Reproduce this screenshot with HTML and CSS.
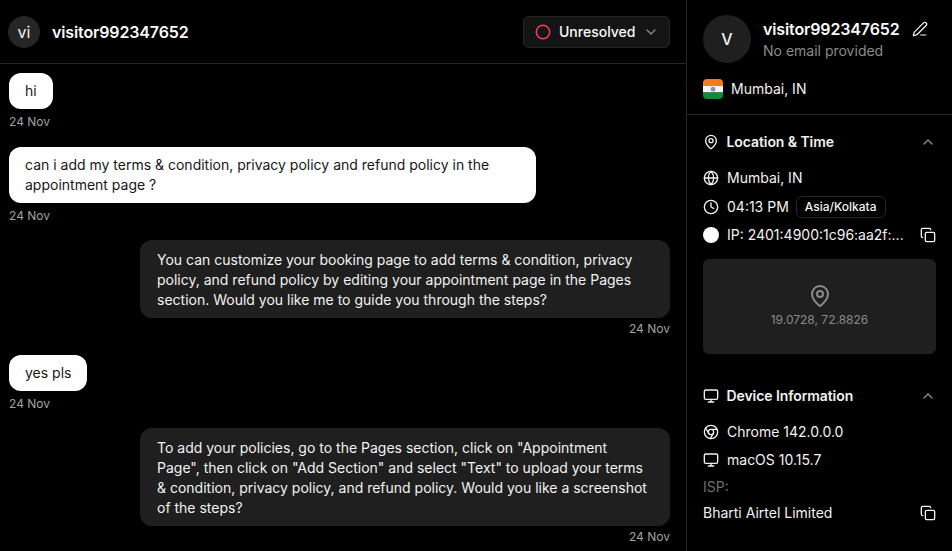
FILE: index.html
```html
<!DOCTYPE html>
<html lang="en">
<head>
<meta charset="utf-8">
<title>Conversation</title>
<link rel="stylesheet" href="styles.css">
</head>
<body>
<svg class="defs" width="0" height="0" aria-hidden="true">
  <defs>
    <symbol id="i-chev-up" viewBox="0 0 24 24"><path d="m18 15-6-6-6 6"/></symbol>
    <symbol id="i-copy" viewBox="0 0 24 24"><rect x="8" y="8" width="14" height="14" rx="2"/><path d="M4 16c-1.100 0-2-.9-2-2V4c0-1.100.9-2 2-2h10c1.100 0 2 .9 2 2"/></symbol>
    <symbol id="i-pin" viewBox="0 0 24 24"><path d="M20 10c0 5-5.500 10.200-7.400 11.800a1 1 0 0 1-1.200 0C9.500 20.200 4 15 4 10a8 8 0 0 1 16 0"/><circle cx="12" cy="10" r="3"/></symbol>
    <symbol id="i-monitor" viewBox="0 0 24 24"><rect x="2" y="3" width="20" height="14" rx="2"/><path d="M8 21h8M12 17v4"/></symbol>
  </defs>
</svg>
<div class="app">
  <main class="chat">
    <header class="chat-head">
      <div class="who">
        <span class="avatar-sm">vi</span>
        <span class="who-name">visitor992347652</span>
      </div>
      <button class="status" type="button">
        <svg class="status-ring" viewBox="0 0 16 16"><circle cx="8" cy="8" r="6.700"/></svg>
        <span>Unresolved</span>
        <svg class="ico ico-chev" viewBox="0 0 24 24"><path d="m6 9 6 6 6-6"/></svg>
      </button>
    </header>
    <section class="messages">
      <div class="msg">
        <p class="bubble user">hi</p>
        <time class="stamp">24 Nov</time>
      </div>
      <div class="msg">
        <p class="bubble user">can i add my terms &amp; condition, privacy policy and refund policy in the appointment page ?</p>
        <time class="stamp">24 Nov</time>
      </div>
      <div class="msg out">
        <p class="bubble agent">You can customize your booking page to add terms &amp; condition, privacy policy, and refund policy by editing your appointment page in the Pages section. Would you like me to guide you through the steps?</p>
        <time class="stamp">24 Nov</time>
      </div>
      <div class="msg">
        <p class="bubble user">yes pls</p>
        <time class="stamp">24 Nov</time>
      </div>
      <div class="msg out">
        <p class="bubble agent">To add your policies, go to the Pages section, click on "Appointment Page", then click on "Add Section" and select "Text" to upload your terms &amp; condition, privacy policy, and refund policy. Would you like a screenshot of the steps?</p>
        <time class="stamp">24 Nov</time>
      </div>
    </section>
  </main>
  <aside class="side">
    <section class="profile">
      <div class="profile-top">
        <span class="avatar-lg">V</span>
        <div class="profile-text">
          <div class="profile-name">
            <span>visitor992347652</span>
            <svg class="ico ico-edit" viewBox="0 0 24 24"><path d="M21.200 6.800a2.800 2.800 0 0 0-4-4L3.800 16.200a2 2 0 0 0-.5.830l-1.300 4.370a.5.500 0 0 0 .6.600l4.400-1.300a2 2 0 0 0 .83-.5z"/><path d="M13 21h8"/></svg>
          </div>
          <div class="muted-line">No email provided</div>
        </div>
      </div>
      <div class="place">
        <svg class="flag" viewBox="0 0 20 20"><rect width="20" height="7" fill="#f47a20"/><rect y="7" width="20" height="6.500" fill="#f4f4f4"/><rect y="13.500" width="20" height="6.500" fill="#138a3a"/><circle cx="10" cy="10.200" r="2.400" fill="#8b8fb8"/></svg>
        <span>Mumbai, IN</span>
      </div>
    </section>
    <section class="panel">
      <div class="panel-head">
        <svg class="ico"><use href="#i-pin"/></svg>
        <h2>Location &amp; Time</h2>
        <svg class="ico ico-fold"><use href="#i-chev-up"/></svg>
      </div>
      <div class="row">
        <svg class="ico" viewBox="0 0 24 24"><circle cx="12" cy="12" r="10"/><path d="M12 2a14.500 14.500 0 0 0 0 20 14.500 14.500 0 0 0 0-20M2 12h20"/></svg>
        <span>Mumbai, IN</span>
      </div>
      <div class="row">
        <svg class="ico" viewBox="0 0 24 24"><circle cx="12" cy="12" r="10"/><path d="M12 6v6l4 2"/></svg>
        <span>04:13 PM</span>
        <span class="tag">Asia/Kolkata</span>
      </div>
      <div class="row">
        <span class="dot"></span>
        <span class="row-fill">IP: 2401:4900:1c96:aa2f:...</span>
        <svg class="ico ico-copy"><use href="#i-copy"/></svg>
      </div>
      <div class="map">
        <svg class="ico ico-map"><use href="#i-pin"/></svg>
        <span>19.0728, 72.8826</span>
      </div>
    </section>
    <section class="panel panel-device">
      <div class="panel-head">
        <svg class="ico"><use href="#i-monitor"/></svg>
        <h2>Device Information</h2>
        <svg class="ico ico-fold"><use href="#i-chev-up"/></svg>
      </div>
      <div class="row">
        <svg class="ico" viewBox="0 0 24 24"><circle cx="12" cy="12" r="10"/><circle cx="12" cy="12" r="4"/><path d="M21.170 8H12M3.950 6.060 8.540 14M10.880 21.940 15.460 14"/></svg>
        <span>Chrome 142.0.0.0</span>
      </div>
      <div class="row">
        <svg class="ico"><use href="#i-monitor"/></svg>
        <span>macOS 10.15.7</span>
      </div>
      <div class="isp-label">ISP:</div>
      <div class="row isp-row">
        <span class="row-fill">Bharti Airtel Limited</span>
        <svg class="ico ico-copy"><use href="#i-copy"/></svg>
      </div>
    </section>
  </aside>
</div>
</body>
</html>
```
FILE: styles.css
```css
* { box-sizing: border-box; }
html, body { margin: 0; height: 100%; background: #000; }
body {
  font-family: Inter, "Liberation Sans", sans-serif;
  font-size: 14px;
  line-height: 20px;
  color: #f2f2f2;
  overflow: hidden;
}
.defs { position: absolute; }
.app { display: flex; height: 551px; overflow: hidden; }
.chat { width: 686px; flex: none; display: flex; flex-direction: column; }
.side { width: 266px; flex: none; border-left: 1px solid #262626; }

.ico {
  width: 16px;
  height: 16px;
  flex: none;
  fill: none;
  stroke: currentColor;
  stroke-width: 2;
  stroke-linecap: round;
  stroke-linejoin: round;
}

.chat-head {
  height: 64px;
  flex: none;
  display: flex;
  align-items: center;
  justify-content: space-between;
  padding: 0 16px 0 8px;
  border-bottom: 1px solid #262626;
}
.who { display: flex; align-items: center; gap: 12px; }
.avatar-sm {
  width: 32px;
  height: 32px;
  border-radius: 50%;
  background: #262626;
  display: flex;
  align-items: center;
  justify-content: center;
  font-size: 16px;
}
.who-name { font-size: 16px; font-weight: 600; line-height: 24px; letter-spacing: -0.13px; color: #fafafa; }
.status {
  width: 147px;
  height: 32px;
  display: flex;
  align-items: center;
  gap: 8px;
  padding: 0 11px;
  background: #141414;
  border: 1px solid #262626;
  border-radius: 6px;
  color: #fafafa;
  font: 500 14px/20px Inter, "Liberation Sans", sans-serif;
}
.status-ring {
  width: 16px;
  height: 16px;
  flex: none;
  fill: none;
  stroke: #f43f5e;
  stroke-width: 1.500;
}
.ico-chev { color: #8a8a8a; margin-left: auto; }

.messages {
  flex: 1;
  min-height: 0;
  overflow: hidden;
  padding: 9px 16px 0 9px;
  display: flex;
  flex-direction: column;
  gap: 16.600px;
}
.msg { display: flex; flex-direction: column; align-items: flex-start; flex: none; }
.msg.out { align-items: flex-end; margin-bottom: 1px; }
.bubble { margin: 0; border-radius: 12px; padding: 8px 16px; }
.bubble.user { background: #fff; color: #171717; max-width: 527px; }
.bubble.agent { background: #1f1f1f; color: #f2f2f2; width: 530px; padding: 10px 17px 8px; }
.stamp { font-size: 12px; line-height: 16px; color: #a1a1a1; margin-top: 5px; }
.msg.out .stamp { margin-top: 3px; }

.profile { height: 115px; padding: 15px 16px 0; border-bottom: 1px solid #262626; }
.profile-top { display: flex; gap: 12px; }
.avatar-lg {
  width: 48px;
  height: 48px;
  border-radius: 50%;
  background: #1f1f1f;
  flex: none;
  display: flex;
  align-items: center;
  justify-content: center;
  font-size: 16px;
  font-weight: 500;
}
.profile-text { padding-top: 2px; }
.profile-name {
  display: flex;
  align-items: center;
  gap: 12px;
  font-size: 16px;
  font-weight: 600;
  line-height: 24px;
  letter-spacing: -0.13px;
  color: #fafafa;
}
.ico-edit { stroke-width: 1.750; }
.muted-line { color: #8a8a8a; }
.place { display: flex; align-items: center; gap: 8px; margin-top: 16px; }
.flag { width: 20px; height: 20px; border-radius: 4px; flex: none; }

.panel { padding: 16px 16px 0; }
.panel-device { padding-top: 31px; }
.panel-head { display: flex; align-items: center; gap: 7.500px; height: 22px; margin-bottom: 11px; }
.panel-head h2 { margin: 0; flex: 1; font-size: 14px; line-height: 20px; font-weight: 600; letter-spacing: -0.08px; color: #f2f2f2; }
.ico-fold { color: #8a8a8a; }
.row { display: flex; align-items: center; gap: 8px; height: 28.500px; color: #f2f2f2; }
.row-fill { flex: 1; min-width: 0; }
.tag {
  font-size: 12px;
  line-height: 16px;
  font-weight: 500;
  padding: 2px 8px;
  margin-left: -1px;
  border: 1px solid #262626;
  border-radius: 6px;
}
.dot { width: 16px; height: 16px; border-radius: 50%; background: #fff; flex: none; }
.ico-copy { color: #f2f2f2; }
.map {
  height: 95px;
  margin-top: 9px;
  background: #1f1f1f;
  border-radius: 6px;
  display: flex;
  flex-direction: column;
  align-items: center;
  justify-content: center;
  gap: 4px;
  font-size: 12px;
  line-height: 16px;
  color: #8a8a8a;
}
.ico-map { width: 24px; height: 24px; }
.isp-label { color: #6f6f6f; height: 24px; margin-top: 0.500px; line-height: 24px; }
```
